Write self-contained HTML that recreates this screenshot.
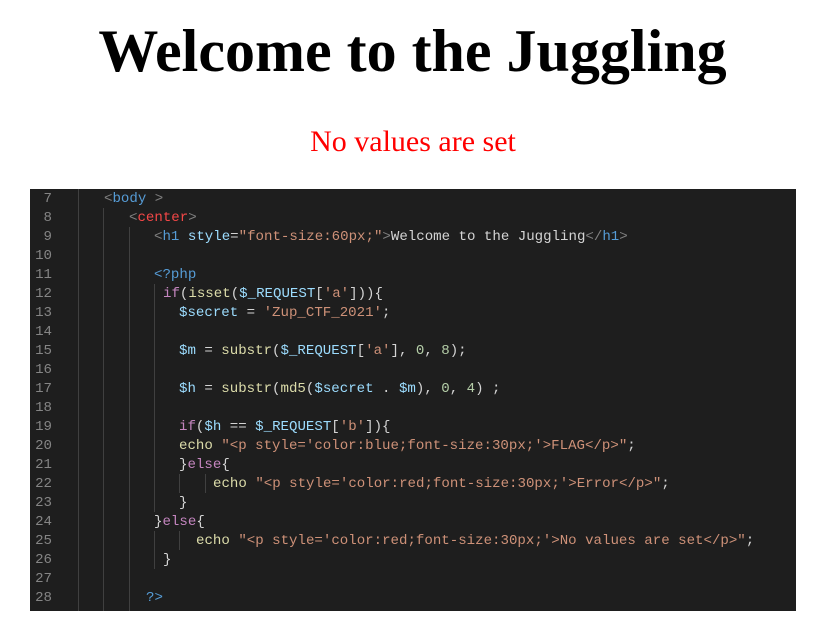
<!DOCTYPE html>
<html><head><meta charset="utf-8"><style>
body{margin:0;width:813px;height:626px;background:#fff;position:relative;overflow:hidden}
h1{position:absolute;left:6px;width:813px;top:17px;margin:0;text-align:center;font:bold 60px "Liberation Serif",serif;line-height:68px;color:#000}
.nv{position:absolute;left:0;width:826px;top:124px;text-align:center;font:30px "Liberation Serif",serif;color:#ff0000;line-height:36px}
.code{position:absolute;left:30px;top:189px;width:766px;height:422px;background:#1e1e1e;font-family:"Liberation Mono",monospace;font-size:14.1px}
.l{position:absolute;height:19px;line-height:19px;white-space:pre;color:#d4d4d4;margin-top:1px}
.n{position:absolute;left:0;width:22px;text-align:right;height:19px;line-height:19px;color:#858585;margin-top:1px}
.g{position:absolute;width:1px;background:#404040}
.t{color:#808080}.tn{color:#569cd6}.r{color:#f44747}.a{color:#9cdcfe}.s{color:#ce9178}.k{color:#c586c0}.f{color:#dcdcaa}.nm{color:#b5cea8}
</style></head><body>
<h1>Welcome to the Juggling</h1>
<div class="nv">No values are set</div>
<div class="code">
<div class="g" style="left:48px;top:0;height:422px"></div>
<div class="g" style="left:73px;top:19px;height:403px"></div>
<div class="g" style="left:99px;top:38px;height:384px"></div>
<div class="g" style="left:124px;top:95px;height:228px"></div>
<div class="g" style="left:149px;top:285px;height:19px"></div>
<div class="g" style="left:175px;top:285px;height:19px"></div>
<div class="g" style="left:124px;top:342px;height:38px"></div>
<div class="g" style="left:149px;top:342px;height:19px"></div>

<div class="n" style="top:0">7</div><div class="n" style="top:19px">8</div><div class="n" style="top:38px">9</div><div class="n" style="top:57px">10</div><div class="n" style="top:76px">11</div><div class="n" style="top:95px">12</div><div class="n" style="top:114px">13</div><div class="n" style="top:133px">14</div><div class="n" style="top:152px">15</div><div class="n" style="top:171px">16</div><div class="n" style="top:190px">17</div><div class="n" style="top:209px">18</div><div class="n" style="top:228px">19</div><div class="n" style="top:247px">20</div><div class="n" style="top:266px">21</div><div class="n" style="top:285px">22</div><div class="n" style="top:304px">23</div><div class="n" style="top:323px">24</div><div class="n" style="top:342px">25</div><div class="n" style="top:361px">26</div><div class="n" style="top:380px">27</div><div class="n" style="top:399px">28</div>

<div class="l" style="top:0;left:74px"><span class="t">&lt;</span><span class="tn">body</span> <span class="t">&gt;</span></div>
<div class="l" style="top:19px;left:99px"><span class="t">&lt;</span><span class="r">center</span><span class="t">&gt;</span></div>
<div class="l" style="top:38px;left:124px"><span class="t">&lt;</span><span class="tn">h1</span> <span class="a">style</span>=<span class="s">"font-size:60px;"</span><span class="t">&gt;</span>Welcome to the Juggling<span class="t">&lt;/</span><span class="tn">h1</span><span class="t">&gt;</span></div>
<div class="l" style="top:76px;left:124px"><span class="tn">&lt;?php</span></div>
<div class="l" style="top:95px;left:133px"><span class="k">if</span>(<span class="f">isset</span>(<span class="a">$_REQUEST</span>[<span class="s">'a'</span>])){</div>
<div class="l" style="top:114px;left:149px"><span class="a">$secret</span> = <span class="s">'Zup_CTF_2021'</span>;</div>
<div class="l" style="top:152px;left:149px"><span class="a">$m</span> = <span class="f">substr</span>(<span class="a">$_REQUEST</span>[<span class="s">'a'</span>], <span class="nm">0</span>, <span class="nm">8</span>);</div>
<div class="l" style="top:190px;left:149px"><span class="a">$h</span> = <span class="f">substr</span>(<span class="f">md5</span>(<span class="a">$secret</span> . <span class="a">$m</span>), <span class="nm">0</span>, <span class="nm">4</span>) ;</div>
<div class="l" style="top:228px;left:149px"><span class="k">if</span>(<span class="a">$h</span> == <span class="a">$_REQUEST</span>[<span class="s">'b'</span>]){</div>
<div class="l" style="top:247px;left:149px"><span class="f">echo</span> <span class="s">"&lt;p style='color:blue;font-size:30px;'&gt;FLAG&lt;/p&gt;"</span>;</div>
<div class="l" style="top:266px;left:149px">}<span class="k">else</span>{</div>
<div class="l" style="top:285px;left:183px"><span class="f">echo</span> <span class="s">"&lt;p style='color:red;font-size:30px;'&gt;Error&lt;/p&gt;"</span>;</div>
<div class="l" style="top:304px;left:149px">}</div>
<div class="l" style="top:323px;left:124px">}<span class="k">else</span>{</div>
<div class="l" style="top:342px;left:166px"><span class="f">echo</span> <span class="s">"&lt;p style='color:red;font-size:30px;'&gt;No values are set&lt;/p&gt;"</span>;</div>
<div class="l" style="top:361px;left:133px">}</div>
<div class="l" style="top:399px;left:116px"><span class="tn">?&gt;</span></div>
</div>
</body></html>
